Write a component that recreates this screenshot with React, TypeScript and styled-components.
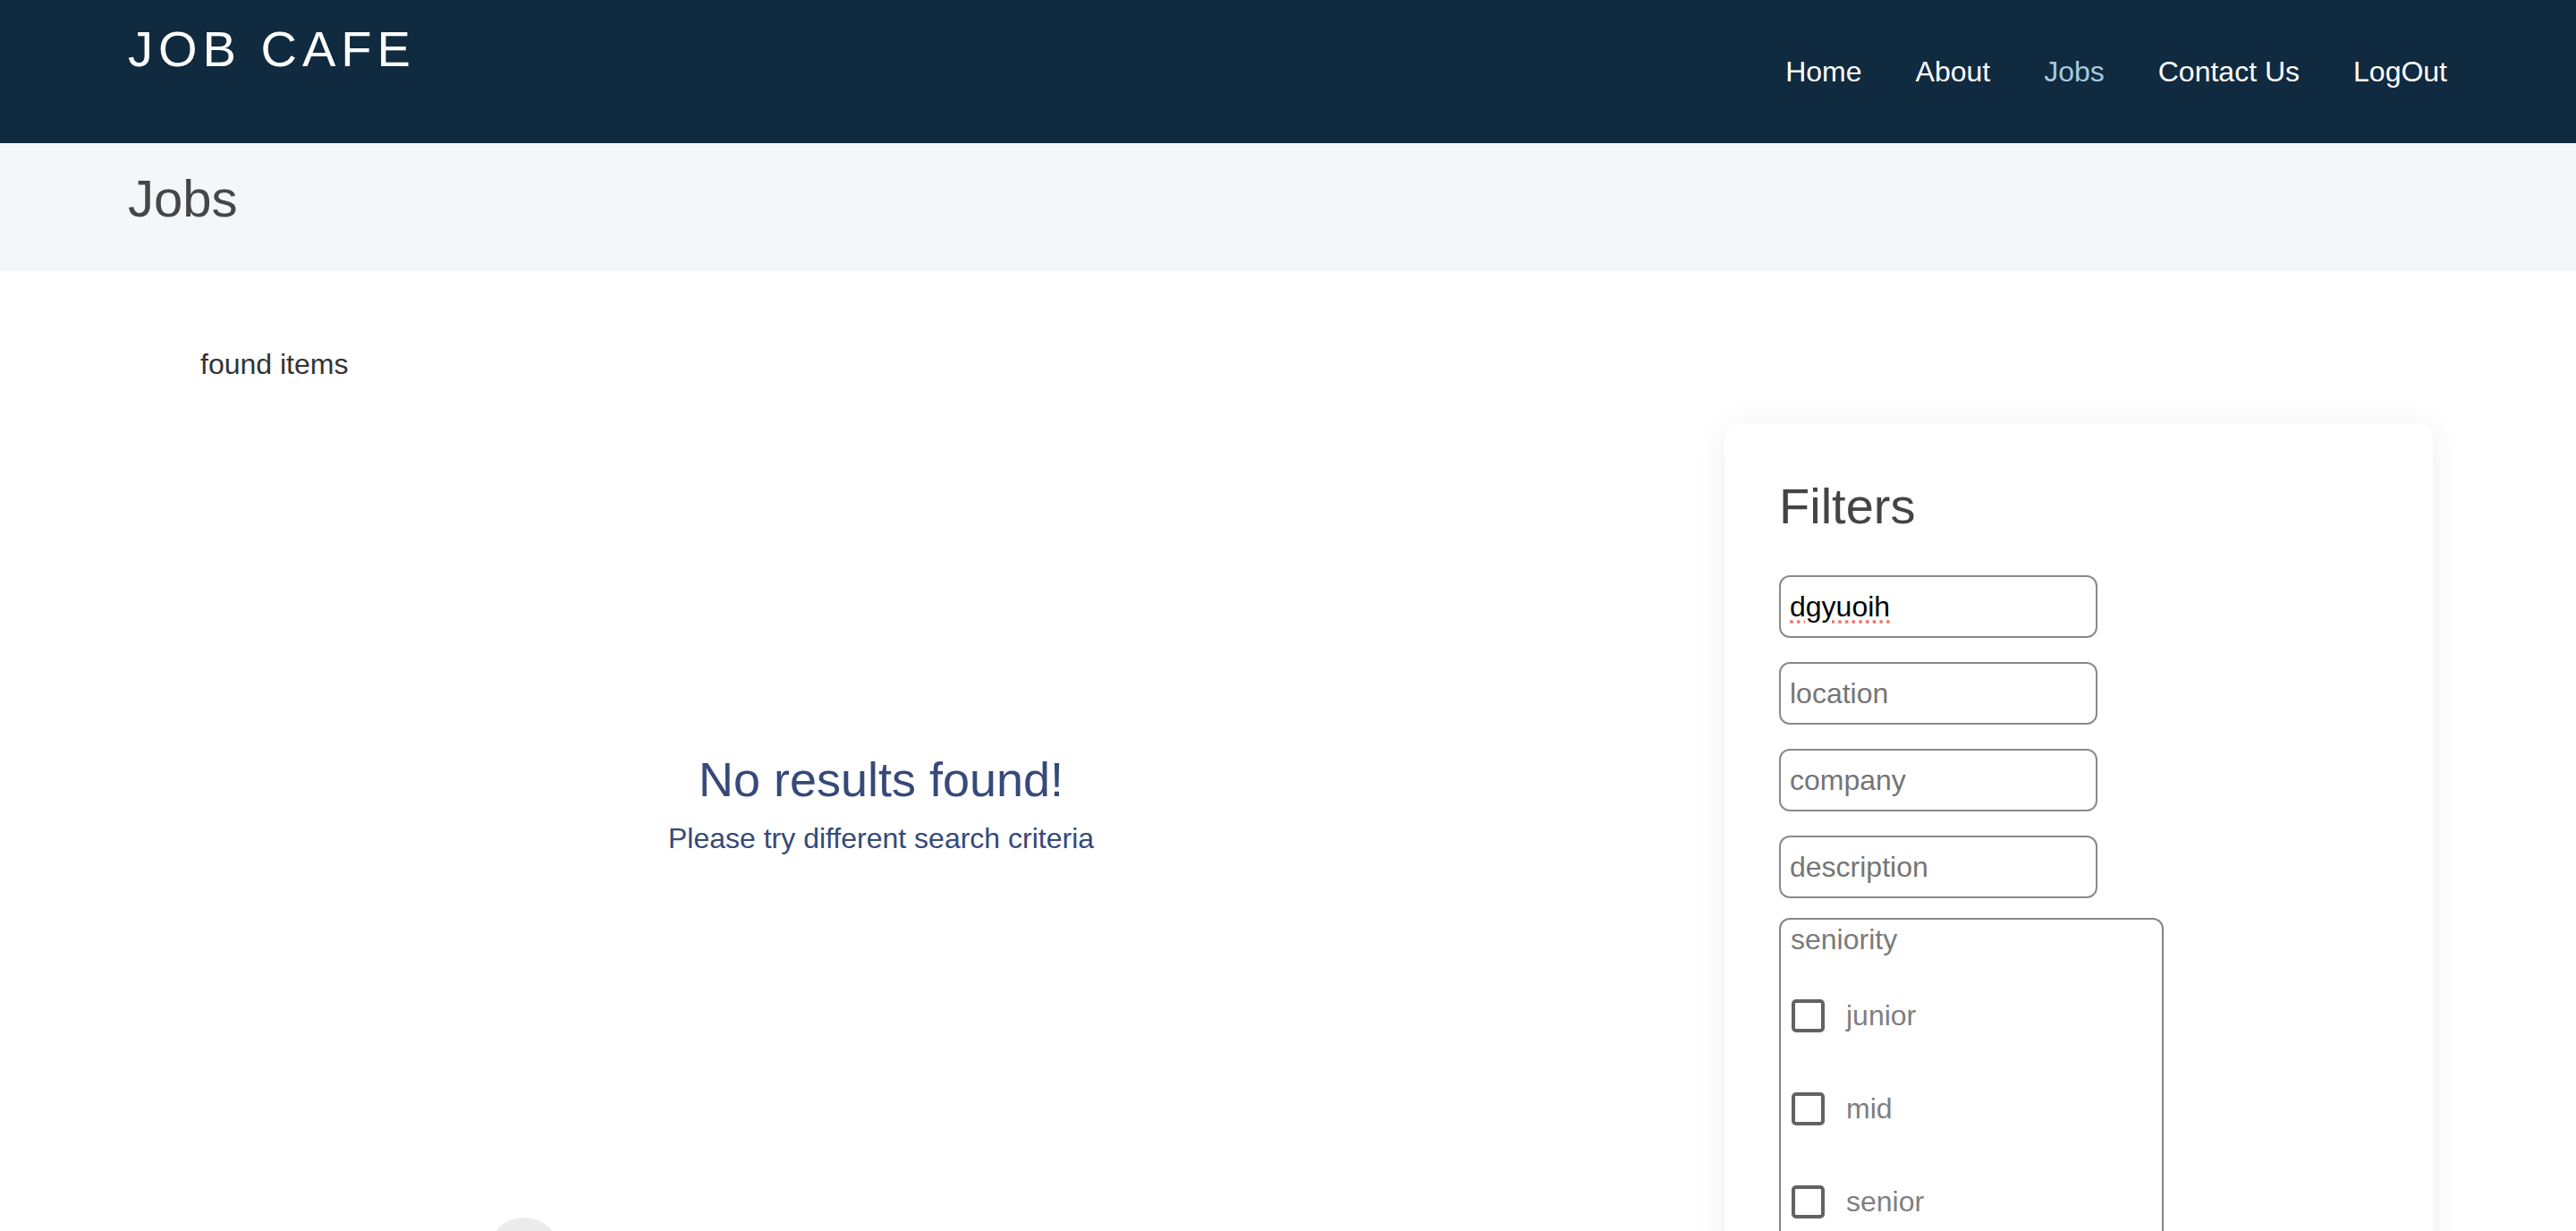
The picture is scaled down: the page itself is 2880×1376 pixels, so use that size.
import React from 'react'
import styled, { createGlobalStyle } from 'styled-components'

const GlobalStyle = createGlobalStyle`
  body {
    margin: 0;
    background: #ffffff;
    font-family: 'Liberation Sans', Arial, Helvetica, sans-serif;
  }
  * {
    box-sizing: border-box;
  }
`

const Header = styled.header`
  height: 160px;
  background: #102a3f;
  padding: 0 144px 0 143px;
  display: flex;
  justify-content: space-between;
  align-items: flex-start;
`

const Logo = styled.a`
  margin-top: 27px;
  font-size: 56px;
  line-height: 56px;
  letter-spacing: 6px;
  color: #ffffff;
  text-decoration: none;
`

const Nav = styled.nav`
  margin-top: 64px;
  display: flex;
  gap: 60px;
`

const NavLink = styled.a<{ active?: boolean }>`
  font-size: 32px;
  line-height: 32px;
  color: ${({ active }) => (active ? '#a8c9df' : '#ffffff')};
  text-decoration: none;
  white-space: nowrap;
`

const Banner = styled.div`
  height: 143px;
  background: #f3f7fa;
  padding: 33px 143px 0;
`

const PageTitle = styled.h1`
  margin: 0;
  font-size: 58px;
  line-height: 58px;
  font-weight: 400;
  color: #464646;
`

const Main = styled.main`
  display: flex;
  align-items: flex-start;
  gap: 101px;
  padding: 0 160px 0 143px;
`

const Results = styled.section`
  flex: 1;
  padding-top: 88px;
`

const FoundItems = styled.div`
  padding-left: 81px;
  font-size: 32px;
  line-height: 32px;
  color: #333333;
`

const EmptyState = styled.div`
  margin-top: 421px;
  display: flex;
  flex-direction: column;
  align-items: center;
  gap: 23px;
  color: #36497a;
`

const EmptyTitle = styled.h2`
  margin: 0;
  font-size: 54px;
  line-height: 54px;
  font-weight: 400;
`

const EmptyHint = styled.p`
  margin: 0;
  font-size: 32px;
  line-height: 32px;
`

const Pagination = styled.div`
  margin-top: 408px;
  padding-left: 402px;
  display: flex;
  gap: 20px;
`

const PageDot = styled.button`
  width: 82px;
  height: 82px;
  border: none;
  border-radius: 50%;
  background: #ebebeb;
`

const FilterCard = styled.aside`
  width: 792px;
  margin-top: 170px;
  padding: 65px 61px 60px;
  background: #ffffff;
  border-radius: 16px;
  box-shadow: 0 4px 36px rgba(0, 0, 0, 0.07);
`

const FilterTitle = styled.h2`
  margin: 0 0 49px;
  font-size: 56px;
  line-height: 56px;
  font-weight: 400;
  color: #444444;
`

const FilterInput = styled.input<{ $misspelled?: boolean }>`
  display: block;
  width: 356px;
  height: 70px;
  margin-bottom: 27px;
  padding: 0 10px;
  border: 2px solid #8a8a8a;
  border-radius: 12px;
  font-family: inherit;
  font-size: 32px;
  color: #000000;
  outline: none;
  ${({ $misspelled }) =>
    $misspelled &&
    `
    text-decoration: underline dotted #f0766c;
    text-decoration-thickness: 4px;
    text-underline-offset: 5px;
  `}

  ::placeholder {
    color: #757575;
    text-decoration: none;
  }
`

const SeniorityBox = styled.fieldset`
  width: 430px;
  margin: -5px 0 0;
  padding: 6px 0 40px 11px;
  border: 2px solid #858585;
  border-radius: 12px;
`

const SeniorityLabel = styled.div`
  font-size: 32px;
  line-height: 32px;
  color: #7a7a7a;
  margin-bottom: 17px;
`

const CheckRow = styled.label`
  height: 104px;
  display: flex;
  align-items: center;
  gap: 24px;
  padding-left: 1px;
  font-size: 32px;
  color: #7f7f7f;
`

const Checkbox = styled.input`
  appearance: none;
  width: 37px;
  height: 37px;
  margin: 0;
  border: 4px solid #626262;
  border-radius: 5px;
  background: #ffffff;
`

const navItems = ['Home', 'About', 'Jobs', 'Contact Us', 'LogOut']
const levels = ['junior', 'mid', 'senior']

export default function App() {
  return (
    <>
      <GlobalStyle />
      <Header>
        <Logo href="#">JOB CAFE</Logo>
        <Nav>
          {navItems.map((item) => (
            <NavLink key={item} href="#" active={item === 'Jobs'}>
              {item}
            </NavLink>
          ))}
        </Nav>
      </Header>
      <Banner>
        <PageTitle>Jobs</PageTitle>
      </Banner>
      <Main>
        <Results>
          <FoundItems>found items</FoundItems>
          <EmptyState>
            <EmptyTitle>No results found!</EmptyTitle>
            <EmptyHint>Please try different search criteria</EmptyHint>
          </EmptyState>
          <Pagination>
            <PageDot aria-label="previous page" />
          </Pagination>
        </Results>
        <FilterCard>
          <FilterTitle>Filters</FilterTitle>
          <FilterInput defaultValue="dgyuoih" placeholder="title" $misspelled />
          <FilterInput placeholder="location" />
          <FilterInput placeholder="company" />
          <FilterInput placeholder="description" />
          <SeniorityBox>
            <SeniorityLabel>seniority</SeniorityLabel>
            {levels.map((level) => (
              <CheckRow key={level}>
                <Checkbox type="checkbox" />
                {level}
              </CheckRow>
            ))}
          </SeniorityBox>
        </FilterCard>
      </Main>
    </>
  )
}
